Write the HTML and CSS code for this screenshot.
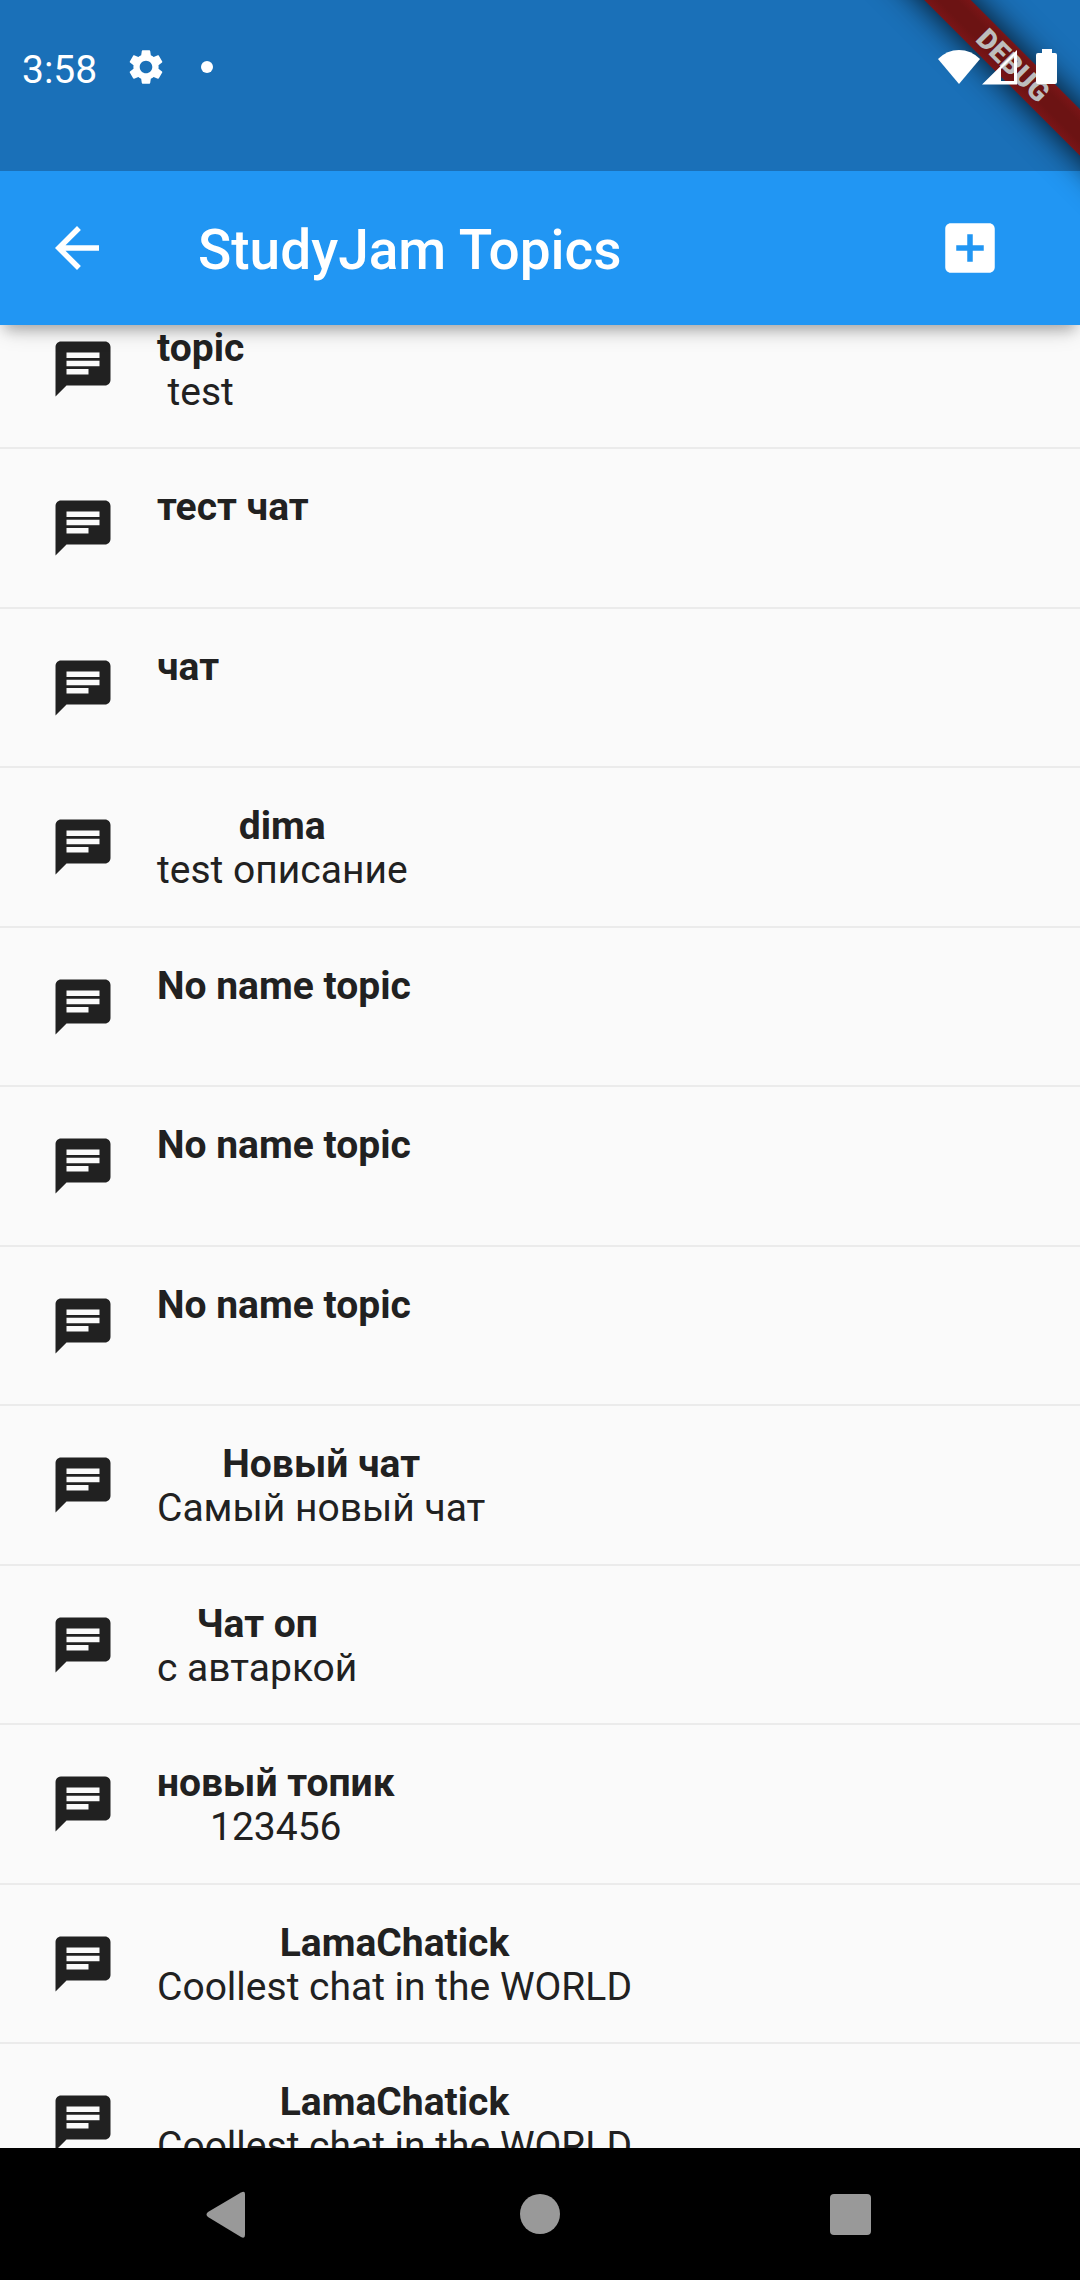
FILE: index.html
```html
<!DOCTYPE html>
<html lang="ru">
<head>
<meta charset="utf-8">
<meta name="viewport" content="width=device-width, initial-scale=1">
<title>StudyJam Topics</title>
<link rel="stylesheet" href="styles.css">
</head>
<body>
<svg class="sprite" aria-hidden="true">
  <symbol id="chat" viewBox="0 0 24 24"><path d="M20 2H4c-1.1 0-1.99.9-1.99 2L2 22l4-4h14c1.1 0 2-.9 2-2V4c0-1.1-.9-2-2-2zM6 9h12v2H6V9zm8 5H6v-2h8v2zm4-6H6V6h12v2z"/></symbol>
</svg>
<div class="screen">
  <div class="status">
    <div class="status-left">
      <span class="clock">3:58</span>
      <svg class="gear" viewBox="0 0 24 24" aria-hidden="true"><path d="M19.14 12.94c.04-.3.06-.61.06-.94 0-.32-.02-.64-.07-.94l2.03-1.58c.18-.14.23-.41.12-.61l-1.92-3.32c-.12-.22-.37-.29-.59-.22l-2.39.96c-.5-.38-1.03-.7-1.62-.94l-.36-2.54c-.04-.24-.24-.41-.48-.41h-3.84c-.24 0-.43.17-.47.41l-.36 2.54c-.59.24-1.13.57-1.62.94l-2.39-.96c-.22-.08-.47 0-.59.22L2.74 8.87c-.12.21-.08.47.12.61l2.03 1.58c-.05.3-.09.63-.09.94s.02.64.07.94l-2.03 1.58c-.18.14-.23.41-.12.61l1.92 3.32c.12.22.37.29.59.22l2.39-.96c.5.38 1.03.7 1.62.94l.36 2.54c.05.24.24.41.48.41h3.84c.24 0 .44-.17.47-.41l.36-2.54c.59-.24 1.13-.56 1.62-.94l2.39.96c.22.08.47 0 .59-.22l1.92-3.32c.12-.22.07-.47-.12-.61l-2.01-1.58zM12 15.6c-1.98 0-3.6-1.62-3.6-3.6s1.62-3.6 3.6-3.6 3.6 1.62 3.6 3.6-1.62 3.6-3.6 3.6z"/></svg>
      <span class="dot"></span>
    </div>
    <div class="status-right">
      <svg class="wifi" viewBox="0 0 42 36" aria-hidden="true"><path d="M21 35 0 10Q9 1 21 1t21 9z"/></svg>
      <svg class="signal" viewBox="0 0 36 36" aria-hidden="true"><path fill-rule="evenodd" d="M0 35.500 35 1v34.500zM19 20v12h13V7z"/></svg>
      <svg class="battery" viewBox="0 0 22 36" aria-hidden="true"><path d="M6 0h10v4h3q2 0 2 2v27q0 2-2 2H2q-2 0-2-2V6q0-2 2-2h4z"/></svg>
    </div>
  </div>
  <header class="appbar">
    <button class="icon-button" type="button" aria-label="Back"><svg class="icon" viewBox="0 0 24 24"><path d="M20 11H7.830l5.590-5.590L12 4l-8 8 8 8 1.410-1.410L7.830 13H20v-2z"/></svg></button>
    <h1 class="title">StudyJam Topics</h1>
    <button class="icon-button" type="button" aria-label="Add topic"><svg class="icon" viewBox="0 0 24 24"><path d="M19 3H5c-1.110 0-2 .9-2 2v14c0 1.100.89 2 2 2h14c1.100 0 2-.9 2-2V5c0-1.100-.9-2-2-2zm-2 10h-4v4h-2v-4H7v-2h4V7h2v4h4v2z"/></svg></button>
  </header>
  <main class="viewport">
    <ul class="topics">
      <li><a class="topic" href="#"><svg class="icon"><use href="#chat"/></svg><span class="text"><b>topic</b><span>test</span></span></a></li>
      <li><a class="topic" href="#"><svg class="icon"><use href="#chat"/></svg><span class="text"><b>тест чат</b><span></span></span></a></li>
      <li><a class="topic" href="#"><svg class="icon"><use href="#chat"/></svg><span class="text"><b>чат</b><span></span></span></a></li>
      <li><a class="topic" href="#"><svg class="icon"><use href="#chat"/></svg><span class="text"><b>dima</b><span>test описание</span></span></a></li>
      <li><a class="topic" href="#"><svg class="icon"><use href="#chat"/></svg><span class="text"><b>No name topic</b><span></span></span></a></li>
      <li><a class="topic" href="#"><svg class="icon"><use href="#chat"/></svg><span class="text"><b>No name topic</b><span></span></span></a></li>
      <li><a class="topic" href="#"><svg class="icon"><use href="#chat"/></svg><span class="text"><b>No name topic</b><span></span></span></a></li>
      <li><a class="topic" href="#"><svg class="icon"><use href="#chat"/></svg><span class="text"><b>Новый чат</b><span>Самый новый чат</span></span></a></li>
      <li><a class="topic" href="#"><svg class="icon"><use href="#chat"/></svg><span class="text"><b>Чат оп</b><span>с автаркой</span></span></a></li>
      <li><a class="topic" href="#"><svg class="icon"><use href="#chat"/></svg><span class="text"><b>новый топик</b><span>123456</span></span></a></li>
      <li><a class="topic" href="#"><svg class="icon"><use href="#chat"/></svg><span class="text"><b>LamaChatick</b><span>Coollest chat in the WORLD</span></span></a></li>
      <li><a class="topic" href="#"><svg class="icon"><use href="#chat"/></svg><span class="text"><b>LamaChatick</b><span>Coollest chat in the WORLD</span></span></a></li>
    </ul>
  </main>
  <nav class="navbar" aria-label="System">
    <button class="nav-button" type="button" aria-label="Back"><svg viewBox="0 0 60 60"><path d="M10 28 43 8.500q4-2 4 1.500v41q0 4-4 2L10 33q-3-2.500 0-5z"/></svg></button>
    <button class="nav-button" type="button" aria-label="Home"><svg viewBox="0 0 60 60"><circle cx="30" cy="30" r="20"/></svg></button>
    <button class="nav-button" type="button" aria-label="Recent apps"><svg viewBox="0 0 60 60"><rect x="8" y="10" width="41" height="41" rx="4"/></svg></button>
  </nav>
  <div class="banner" aria-hidden="true"><div class="ribbon">DEBUG</div></div>
</div>
</body>
</html>
```
FILE: styles.css
```css
* {
  box-sizing: border-box;
}

body {
  margin: 0;
  font-family: Roboto, "Noto Sans", sans-serif;
  background: #fafafa;
  color: #212121;
}

button {
  display: flex;
  padding: 0;
  border: 0;
  background: none;
  color: inherit;
}

svg {
  flex: none;
  fill: currentColor;
}

.sprite {
  display: none;
}

.screen {
  position: relative;
  display: flex;
  flex-direction: column;
  height: 100vh;
  overflow: hidden;
}

/* System status bar */
.status {
  display: flex;
  justify-content: space-between;
  flex: none;
  height: 171px;
  padding: 43px 22px 0;
  background: #1a70b8;
  color: #fff;
}

.status-left,
.status-right {
  display: flex;
  align-items: center;
  height: 48px;
}

.status-right {
  position: relative;
  z-index: 3;
}

.clock {
  padding-top: 6px;
  font-size: 39px;
  line-height: 48px;
}

.gear {
  width: 42px;
  height: 42px;
  margin-left: 28px;
}

.dot {
  width: 12px;
  height: 12px;
  margin-left: 34px;
  border-radius: 50%;
  background: #fff;
}

.wifi {
  width: 42px;
  height: 36px;
}

.signal {
  width: 36px;
  height: 36px;
  margin-left: 2px;
}

.battery {
  width: 22px;
  height: 36px;
  margin-left: 18px;
}

/* App bar: its shadow falls only on the list below */
.appbar {
  position: relative;
  z-index: 1;
  display: flex;
  align-items: center;
  flex: none;
  height: 154px;
  padding: 0 77px 0 44px;
  background: #2196f3;
  color: #fff;
  box-shadow: 0 10px 12px -5px rgba(0, 0, 0, .2), 0 8px 22px -4px rgba(0, 0, 0, .2);
  clip-path: inset(0 0 -40px 0);
}

.icon {
  width: 66px;
  height: 66px;
}

.title {
  flex: 1;
  margin: 0 0 0 88px;
  padding-top: 3px;
  font-size: 55px;
  font-weight: 500;
  line-height: 64px;
}

/* Topic list, scrolled part of a row down */
.viewport {
  flex: 1;
  min-height: 0;
  overflow: hidden;
}

.topics {
  margin: -35px 0 0;
  padding: 0;
  list-style: none;
}

.topic {
  display: flex;
  align-items: center;
  gap: 41px;
  height: 160px;
  padding: 0 50px;
  border-bottom: 2px solid #ebebeb;
  color: inherit;
  text-decoration: none;
}

.topics li:nth-child(odd) .topic {
  height: 159px;
}

.text {
  display: flex;
  flex-direction: column;
  align-items: center;
  padding-top: 2px;
  font-size: 39px;
  line-height: 44px;
}

.text > * {
  min-height: 44px;
}

/* System navigation */
.navbar {
  display: flex;
  justify-content: center;
  align-items: center;
  flex: none;
  gap: 252px;
  height: 132px;
  background: #000;
  color: #999;
}

.nav-button svg {
  width: 60px;
  height: 60px;
}

/* Corner ribbon */
.banner {
  position: absolute;
  top: 0;
  right: 0;
  z-index: 2;
  width: 220px;
  height: 220px;
  overflow: hidden;
  pointer-events: none;
}

.ribbon {
  position: absolute;
  top: 49px;
  right: -133px;
  width: 400px;
  height: 33px;
  transform: rotate(45deg);
  background: linear-gradient(#7a1517, #6c1313 30%, #6c1313 70%, #7a1517);
  box-shadow: 0 0 33px rgba(0, 0, 0, .9);
  color: #bdbdbd;
  font-size: 28px;
  font-weight: 900;
  line-height: 33px;
  text-align: center;
}
```
